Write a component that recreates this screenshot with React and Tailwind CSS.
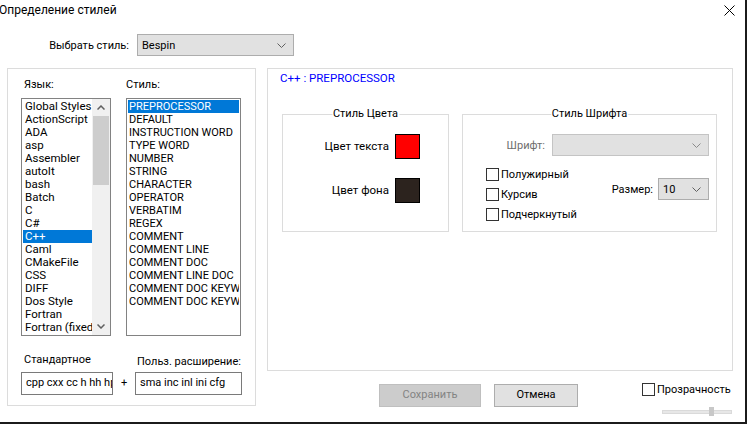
import React from "react";

const langs = [
  "Global Styles", "ActionScript", "ADA", "asp", "Assembler", "autoIt", "bash", "Batch",
  "C", "C#", "C++", "Caml", "CMakeFile", "CSS", "DIFF", "Dos Style", "Fortran", "Fortran (fixed form)",
];
const styles = [
  "PREPROCESSOR", "DEFAULT", "INSTRUCTION WORD", "TYPE WORD", "NUMBER", "STRING", "CHARACTER",
  "OPERATOR", "VERBATIM", "REGEX", "COMMENT", "COMMENT LINE", "COMMENT DOC", "COMMENT LINE DOC",
  "COMMENT DOC KEYWORD", "COMMENT DOC KEYWORD ERROR",
];

function Chevron({ color = "#606060" }) {
  return (
    <svg width="9" height="5" viewBox="0 0 9 5" className="shrink-0">
      <polyline points="0.5,0.5 4.5,4.5 8.5,0.5" fill="none" stroke={color} strokeWidth="1" />
    </svg>
  );
}

function Combo({ w, text, disabled }) {
  return (
    <div
      className={
        "h-[22px] border flex items-center justify-between pl-[4px] pr-[7px] " +
        (disabled ? "bg-[#e1e1e1] border-[#c4c4c4]" : "bg-[#e1e1e1] border-[#adadad]")
      }
      style={{ width: w }}
    >
      <span className="leading-[13px]">{text}</span>
      <Chevron color={disabled ? "#8a8a8a" : "#606060"} />
    </div>
  );
}

function Check({ label }) {
  return (
    <div className="flex items-center h-[13px]">
      <div className="w-[13px] h-[13px] border border-[#333333] bg-white shrink-0" />
      <span className="ml-[2px] leading-[13px] whitespace-nowrap">{label}</span>
    </div>
  );
}

export default function App() {
  return (
    <div className="w-[747px] h-[424px] bg-[#1b1b1b] overflow-hidden">
      <div className="w-[745px] h-[422px] bg-white flex flex-col text-[11px] text-black [font-family:Roboto,sans-serif]">
        {/* title bar */}
        <div className="h-[21px] flex items-center justify-between shrink-0">
          <span className="text-[12px] leading-[14px] -ml-[1px] mt-[-1px]">Определение стилей</span>
          <svg width="11" height="11" viewBox="0 0 11 11" className="mr-[10px] mt-[-1px]">
            <line x1="0.5" y1="0.5" x2="10.5" y2="10.5" stroke="#000" strokeWidth="1" />
            <line x1="10.5" y1="0.5" x2="0.5" y2="10.5" stroke="#000" strokeWidth="1" />
          </svg>
        </div>

        {/* choose style */}
        <div className="flex items-center mt-[13px] pl-[49px] gap-[8px] shrink-0">
          <span className="w-[80px] text-right whitespace-nowrap leading-[13px]">Выбрать стиль:</span>
          <Combo w={157} text="Bespin" />
        </div>

        {/* main */}
        <div className="flex mt-[12px]">
          {/* left group */}
          <div className="ml-[7px] w-[249px] h-[338px] border border-[#dcdcdc] flex flex-col">
            <div className="flex pt-[9px] pl-[13px]">
              <div className="flex flex-col w-[90px]">
                <div className="h-[20px] leading-[13px] pl-[3px]">Язык:</div>
                <div className="h-[238px] border border-[#828282] flex overflow-hidden">
                  <div className="w-[70px] pl-[1px] pt-[1px] overflow-hidden">
                    {langs.map((l) => (
                      <div
                        key={l}
                        className={
                          "h-[13px] leading-[13px] pl-[2px] whitespace-nowrap text-[11.5px] " +
                          (l === "C++" ? "bg-[#0078d7] text-white" : "")
                        }
                      >
                        {l}
                      </div>
                    ))}
                  </div>
                  <div className="w-[18px] bg-[#f0f0f0] flex flex-col">
                    <div className="h-[17px] flex items-center justify-center">
                      <svg width="8" height="5" viewBox="0 0 8 5">
                        <polyline points="0.5,4.5 4,1 7.5,4.5" fill="none" stroke="#606060" strokeWidth="1.5" />
                      </svg>
                    </div>
                    <div className="mx-[1px] h-[69px] bg-[#cdcdcd]" />
                    <div className="flex-1" />
                    <div className="h-[17px] flex items-center justify-center">
                      <svg width="8" height="5" viewBox="0 0 8 5">
                        <polyline points="0.5,0.5 4,4 7.5,0.5" fill="none" stroke="#606060" strokeWidth="1.5" />
                      </svg>
                    </div>
                  </div>
                </div>
              </div>
              <div className="flex flex-col w-[115px] ml-[15px]">
                <div className="h-[20px] leading-[13px]">Стиль:</div>
                <div className="h-[238px] border border-[#828282] px-[1px] pt-[1px] overflow-hidden">
                  {styles.map((s) => (
                    <div
                      key={s}
                      className={
                        "h-[13px] leading-[13px] pl-[1px] whitespace-nowrap overflow-hidden " +
                        (s === "PREPROCESSOR" ? "bg-[#0078d7] text-white" : "")
                      }
                    >
                      {s}
                    </div>
                  ))}
                </div>
              </div>
            </div>

            <div className="flex pl-[13px] mt-[17px]">
              <div className="flex flex-col w-[92px]">
                <div className="h-[19px] leading-[13px] pl-[3px]">Стандартное</div>
                <div className="h-[23px] border border-[#7a7a7a] pl-[4px] flex items-center overflow-hidden whitespace-nowrap">
                  cpp cxx cc h hh hpp hxx
                </div>
              </div>
              <div className="w-[22px] h-[23px] self-end flex items-center justify-center">+</div>
              <div className="flex flex-col w-[107px]">
                <div className="h-[19px] leading-[13px] pl-[2px] pt-[2px] whitespace-nowrap">Польз. расширение:</div>
                <div className="h-[23px] border border-[#7a7a7a] pl-[4px] flex items-center overflow-hidden whitespace-nowrap">
                  sma inc inl ini cfg
                </div>
              </div>
            </div>
          </div>

          {/* right column */}
          <div className="ml-[11px] flex flex-col">
            <div className="w-[466px] h-[303px] border border-[#dcdcdc] flex flex-col">
              <div className="pl-[12px] pt-[3px] leading-[13px] text-[11.5px] text-[#0000ff]">C++ : PREPROCESSOR</div>
              <div className="flex mt-[29px] pl-[14px]">
                {/* colour group */}
                <div className="relative w-[167px] h-[118px] border border-[#dcdcdc] flex flex-col items-end pt-[19px] pr-[28px] gap-[19px]">
                  <span className="absolute left-1/2 -translate-x-1/2 -top-[8px] bg-white px-[1px] leading-[13px] whitespace-nowrap">
                    Стиль Цвета
                  </span>
                  <div className="flex items-center gap-[6px]">
                    <span className="leading-[13px] text-[11.5px]">Цвет текста</span>
                    <div className="w-[25px] h-[25px] border border-black bg-[#ff0000]" />
                  </div>
                  <div className="flex items-center gap-[6px]">
                    <span className="leading-[13px] text-[11.5px]">Цвет фона</span>
                    <div className="w-[25px] h-[25px] border border-black bg-[#2c231e]" />
                  </div>
                </div>
                {/* font group */}
                <div className="relative ml-[13px] w-[255px] h-[118px] border border-[#dcdcdc] flex flex-col pt-[19px]">
                  <span className="absolute left-1/2 -translate-x-1/2 -top-[8px] bg-white px-[1px] leading-[13px] whitespace-nowrap">
                    Стиль Шрифта
                  </span>
                  <div className="flex items-center justify-end pr-[7px] gap-[7px]">
                    <span className="text-[#6d6d6d] leading-[13px]">Шрифт:</span>
                    <Combo w={157} text="" disabled />
                  </div>
                  <div className="flex justify-between mt-[12px] pl-[23px] pr-[7px]">
                    <div className="flex flex-col gap-[7px]">
                      <Check label="Полужирный" />
                      <Check label="Курсив" />
                      <Check label="Подчеркнутый" />
                    </div>
                    <div className="flex items-center gap-[5px] mt-[10px] self-start">
                      <span className="leading-[13px]">Размер:</span>
                      <Combo w={51} text="10" />
                    </div>
                  </div>
                </div>
              </div>
            </div>

            {/* bottom row */}
            <div className="flex items-start mt-[12px]">
              <button className="ml-[112px] mt-[1px] w-[102px] h-[23px] bg-[#cccccc] border border-[#bfbfbf] text-[#838383] flex items-center justify-center">
                Сохранить
              </button>
              <button className="ml-[13px] mt-[1px] w-[84px] h-[23px] bg-[#e1e1e1] border border-[#adadad] flex items-center justify-center">
                Отмена
              </button>
              <div className="ml-[64px] flex flex-col">
                <Check label="Прозрачность" />
                <div className="relative ml-[20px] mt-[11px] w-[70px] h-[9px] flex items-center">
                  <div className="w-full h-[4px] bg-[#e7e7e7] border border-[#dadada]" />
                  <div className="absolute left-[47px] top-0 w-[5px] h-[9px] bg-[#c8c8c8]" />
                </div>
              </div>
            </div>
          </div>
        </div>
      </div>
    </div>
  );
}
